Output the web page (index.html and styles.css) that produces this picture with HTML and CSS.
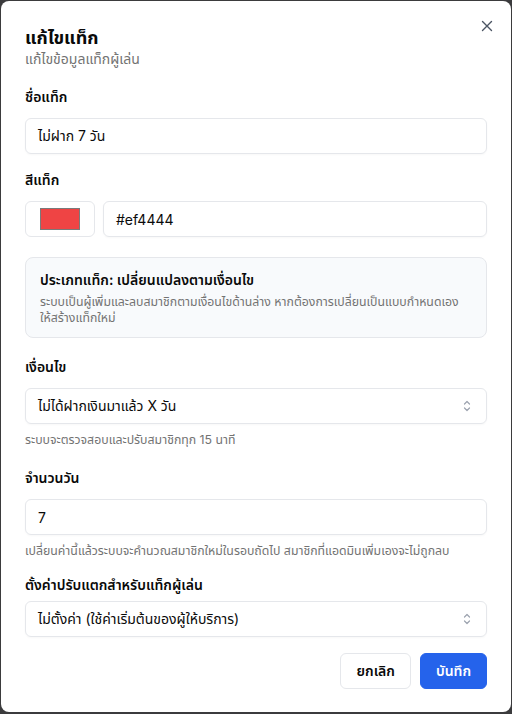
FILE: index.html
```html
<!DOCTYPE html>
<html lang="th">
<head>
<meta charset="utf-8">
<link rel="stylesheet" href="styles.css">
</head>
<body>
<div class="modal">
  <button class="close" aria-label="close">
    <svg width="12" height="12" viewBox="0 0 12 12"><path d="M1.5 1.5l9 9M10.5 1.5l-9 9" stroke="#4b5563" stroke-width="1.4" stroke-linecap="round"/></svg>
  </button>
  <div class="header">
    <h2 class="title">แก้ไขแท็ก</h2>
    <p class="subtitle">แก้ไขข้อมูลแท็กผู้เล่น</p>
  </div>
  <div class="form">
    <div class="field">
      <label class="label">ชื่อแท็ก</label>
      <div class="input">ไม่ฝาก 7 วัน</div>
    </div>
    <div class="field">
      <label class="label">สีแท็ก</label>
      <div class="color-row">
        <div class="color-box"><span class="swatch"></span></div>
        <div class="input grow">#ef4444</div>
      </div>
    </div>
    <div class="info">
      <div class="info-title">ประเภทแท็ก: เปลี่ยนแปลงตามเงื่อนไข</div>
      <div class="info-text">ระบบเป็นผู้เพิ่มและลบสมาชิกตามเงื่อนไขด้านล่าง หากต้องการเปลี่ยนเป็นแบบกำหนดเอง ให้สร้างแท็กใหม่</div>
    </div>
    <div class="field field-after-info">
      <label class="label">เงื่อนไข</label>
      <div class="input select">
        <span>ไม่ได้ฝากเงินมาแล้ว X วัน</span>
        <svg class="chev" width="10" height="14" viewBox="0 0 10 14"><path d="M2.5 5l2.5-2.5L7.5 5M2.5 9l2.5 2.5L7.5 9" fill="none" stroke="#9ca3af" stroke-width="1.2" stroke-linecap="round" stroke-linejoin="round"/></svg>
      </div>
      <p class="help">ระบบจะตรวจสอบและปรับสมาชิกทุก 15 นาที</p>
    </div>
    <div class="field field-days">
      <label class="label">จำนวนวัน</label>
      <div class="input">7</div>
      <p class="help">เปลี่ยนค่านี้แล้วระบบจะคำนวณสมาชิกใหม่ในรอบถัดไป สมาชิกที่แอดมินเพิ่มเองจะไม่ถูกลบ</p>
    </div>
    <div class="field">
      <label class="label label-tight">ตั้งค่าปรับแตกสำหรับแท็กผู้เล่น</label>
      <div class="input select">
        <span>ไม่ตั้งค่า (ใช้ค่าเริ่มต้นของผู้ให้บริการ)</span>
        <svg class="chev" width="10" height="14" viewBox="0 0 10 14"><path d="M2.5 5l2.5-2.5L7.5 5M2.5 9l2.5 2.5L7.5 9" fill="none" stroke="#9ca3af" stroke-width="1.2" stroke-linecap="round" stroke-linejoin="round"/></svg>
      </div>
    </div>
  </div>
  <div class="footer">
    <button class="btn btn-outline">ยกเลิก</button>
    <button class="btn btn-primary">บันทึก</button>
  </div>
</div>
</body>
</html>
```

FILE: styles.css
```css
* { box-sizing: border-box; }
html, body { margin: 0; padding: 0; }
body {
  background: #3b3b3d;
  font-family: Inter, "Noto Sans Thai", "Noto Sans", sans-serif;
  color: #0a0a0a;
  width: 512px;
  height: 714px;
  overflow: hidden;
  padding: 1px 1px 2px 1px;
}
.modal {
  position: relative;
  background: #fff;
  border-radius: 8px;
  height: 711px;
  padding: 23px 24px 24px;
}
.close {
  position: absolute;
  top: 19px;
  right: 18px;
  background: none;
  border: 0;
  padding: 0;
  width: 12px;
  height: 12px;
  display: flex;
}
.header { display: flex; flex-direction: column; }
.title { margin: 0 0 -3px; font-size: 18px; font-weight: 700; line-height: 28px; }
.subtitle { margin: 0; font-size: 14px; line-height: 20px; color: #737373; }
.form { display: flex; flex-direction: column; gap: 16px; margin-top: 18px; }
.field { display: flex; flex-direction: column; }
.field-after-info { margin-top: 3px; }
.field-days { margin-top: 4px; }
.label { font-size: 14px; font-weight: 600; line-height: 20px; margin-bottom: 11px; }
.label-tight { margin-bottom: 6px; }
.input {
  height: 36px;
  border: 1px solid #e5e7eb;
  border-radius: 6px;
  padding: 0 12px;
  font-size: 14px;
  display: flex;
  align-items: center;
  box-shadow: 0 1px 2px rgba(0,0,0,0.03);
}
.grow { flex: 1; }
.color-row { display: flex; gap: 8px; }
.color-box {
  width: 70px;
  height: 36px;
  border: 1px solid #e5e7eb;
  border-radius: 6px;
  display: flex;
  align-items: center;
  justify-content: center;
}
.swatch {
  width: 40px;
  height: 22px;
  background: #ef4444;
  border: 1px solid #7a7a7a;
}
.info {
  background: #f8fafc;
  border: 1px solid #e5e7eb;
  border-radius: 8px;
  padding: 12px 20px 11px 14px;
  margin-top: 4px;
}
.info-title { font-size: 14px; font-weight: 600; line-height: 20px; }
.info-text { font-size: 12.3px; line-height: 16px; color: #737373; margin-top: 4px; }
.select { justify-content: space-between; }
.chev { margin-right: 2px; }
.help { margin: 8px 0 0; font-size: 12.3px; line-height: 16px; color: #737373; }
.footer {
  display: flex;
  justify-content: flex-end;
  gap: 9px;
  margin-top: 16px;
}
.btn {
  height: 36px;
  border-radius: 6px;
  font-family: inherit;
  font-size: 14px;
  font-weight: 600;
  padding: 0 15px;
}
.btn-outline { background: #fff; border: 1px solid #e5e7eb; color: #0a0a0a; }
.btn-primary { background: #2563eb; border: 1px solid #2563eb; color: #fff; }
```
